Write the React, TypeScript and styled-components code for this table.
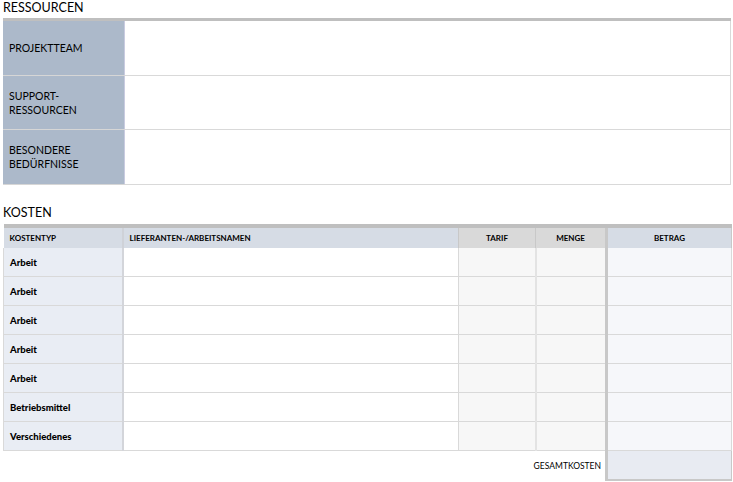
import React from 'react'
import styled, { createGlobalStyle, css } from 'styled-components'

const GlobalStyle = createGlobalStyle`
  html, body {
    margin: 0;
    padding: 0;
    background: #fff;
  }
  body {
    font-family: Lato, 'Liberation Sans', sans-serif;
    color: #000;
  }
`

const resources = ['PROJEKTTEAM', 'SUPPORT-\nRESSOURCEN', 'BESONDERE\nBEDÜRFNISSE']

const costTypes = ['Arbeit', 'Arbeit', 'Arbeit', 'Arbeit', 'Arbeit', 'Betriebsmittel', 'Verschiedenes']

export default function App() {
  return (
    <>
      <GlobalStyle />
      <StyledPage>
        <StyledSectionTitle>RESSOURCEN</StyledSectionTitle>
        <StyledResourceTable>
          <tbody>
            {resources.map((label) => (
              <tr key={label}>
                <StyledResourceLabel>{label}</StyledResourceLabel>
                <StyledResourceValue />
              </tr>
            ))}
          </tbody>
        </StyledResourceTable>

        <StyledSectionTitle $spaced>KOSTEN</StyledSectionTitle>
        <StyledCostTable>
          <colgroup>
            <col style={{ width: 119 }} />
            <col style={{ width: 336 }} />
            <col style={{ width: 77 }} />
            <col style={{ width: 71 }} />
            <col style={{ width: 125 }} />
          </colgroup>
          <thead>
            <tr>
              <StyledHead $tone='blue' $align='left' $type>KOSTENTYP</StyledHead>
              <StyledHead $tone='blue' $align='left'>LIEFERANTEN-/ARBEITSNAMEN</StyledHead>
              <StyledHead $tone='gray'>TARIF</StyledHead>
              <StyledHead $tone='gray'>MENGE</StyledHead>
              <StyledHead $tone='blue' $amount>BETRAG</StyledHead>
            </tr>
          </thead>
          <tbody>
            {costTypes.map((type, index) => (
              <tr key={index}>
                <StyledTypeCell>{type}</StyledTypeCell>
                <StyledCell $kind='name' />
                <StyledCell $kind='rate' />
                <StyledCell $kind='qty' />
                <StyledCell $kind='amount' />
              </tr>
            ))}
            <tr>
              <StyledTotalLabel colSpan={4}>GESAMTKOSTEN</StyledTotalLabel>
              <StyledTotalValue />
            </tr>
          </tbody>
        </StyledCostTable>
      </StyledPage>
    </>
  )
}

const StyledPage = styled.div`
  width: 733px;
  padding: 0 2px 0 3px;
  box-sizing: border-box;
`

const StyledSectionTitle = styled.h2<{ $spaced?: boolean }>`
  margin: 0;
  font-size: 12.5px;
  font-weight: 400;
  line-height: 16px;
  height: 18px;
  ${({ $spaced }) =>
    $spaced &&
    css`
      margin-top: 20px;
      height: 19px;
      line-height: 16px;
    `}
`

const StyledResourceTable = styled.table`
  width: 728px;
  border-collapse: collapse;
  border-top: 3px solid #bfbfbf;
  table-layout: fixed;
`

const StyledResourceLabel = styled.th`
  width: 121px;
  height: 53.7px;
  padding: 0 0 0 6px;
  background: #acb9ca;
  border-right: 1px solid #c9cbe0;
  border-bottom: 1px solid #d6d6d6;
  text-align: left;
  font-size: 10.5px;
  font-weight: 400;
  line-height: 14px;
  white-space: pre-line;
  box-sizing: border-box;
`

const StyledResourceValue = styled.td`
  height: 53.7px;
  padding: 0;
  border-right: 1px solid #d9d9d9;
  border-bottom: 1px solid #d9d9d9;
`

const StyledCostTable = styled.table`
  width: 728px;
  border-collapse: collapse;
  table-layout: fixed;
`

const headTones = {
  blue: '#d6dce5',
  gray: '#d9d9d9'
}

const StyledHead = styled.th<{
  $tone: 'blue' | 'gray'
  $align?: 'left' | 'center'
  $type?: boolean
  $amount?: boolean
}>`
  height: 22px;
  padding: 0 6px;
  background: ${({ $tone }) => headTones[$tone]};
  border-top: 4px solid #bfbfbf;
  border-right: 1px solid #c8c8c8;
  text-align: ${({ $align = 'center' }) => $align};
  font-size: 8px;
  font-weight: 700;
  box-sizing: border-box;
  ${({ $type }) =>
    $type &&
    css`
      border-right: 2px solid #cfd2d8;
    `}
  ${({ $amount }) =>
    $amount &&
    css`
      border-left: 3px solid #c8c8c8;
      border-right: 1px solid #c8c8c8;
    `}
`

const StyledTypeCell = styled.td`
  height: 28px;
  padding: 0 6px;
  background: #e9edf4;
  border-left: 1px solid #d9d9d9;
  border-right: 2px solid #d3d5da;
  border-bottom: 1px solid #d9d9d9;
  font-size: 9.5px;
  font-weight: 900;
  box-sizing: border-box;
`

const cellKinds = {
  name: css`
    background: #fff;
  `,
  rate: css`
    background: #f7f7f7;
    border-left: 1px solid #d9d9d9;
  `,
  qty: css`
    background: #f7f7f7;
    border-left: 2px solid #e3e3e3;
  `,
  amount: css`
    background: #f6f7fa;
    border-left: 3px solid #c8c8c8;
    border-right: 1px solid #d9d9d9;
  `
}

const StyledCell = styled.td<{ $kind: keyof typeof cellKinds }>`
  height: 28px;
  padding: 0;
  border-bottom: 1px solid #d9d9d9;
  ${({ $kind }) => cellKinds[$kind]}
`

const StyledTotalLabel = styled.td`
  height: 28px;
  padding: 0 4px 0 0;
  border-top: 1px solid #c8c8c8;
  text-align: right;
  font-size: 8.5px;
  font-weight: 400;
`

const StyledTotalValue = styled.td`
  height: 28px;
  padding: 0;
  background: #e8ebf2;
  border-left: 3px solid #c8c8c8;
  border-right: 1px solid #c8c8c8;
  border-bottom: 2px solid #c8c8c8;
`
